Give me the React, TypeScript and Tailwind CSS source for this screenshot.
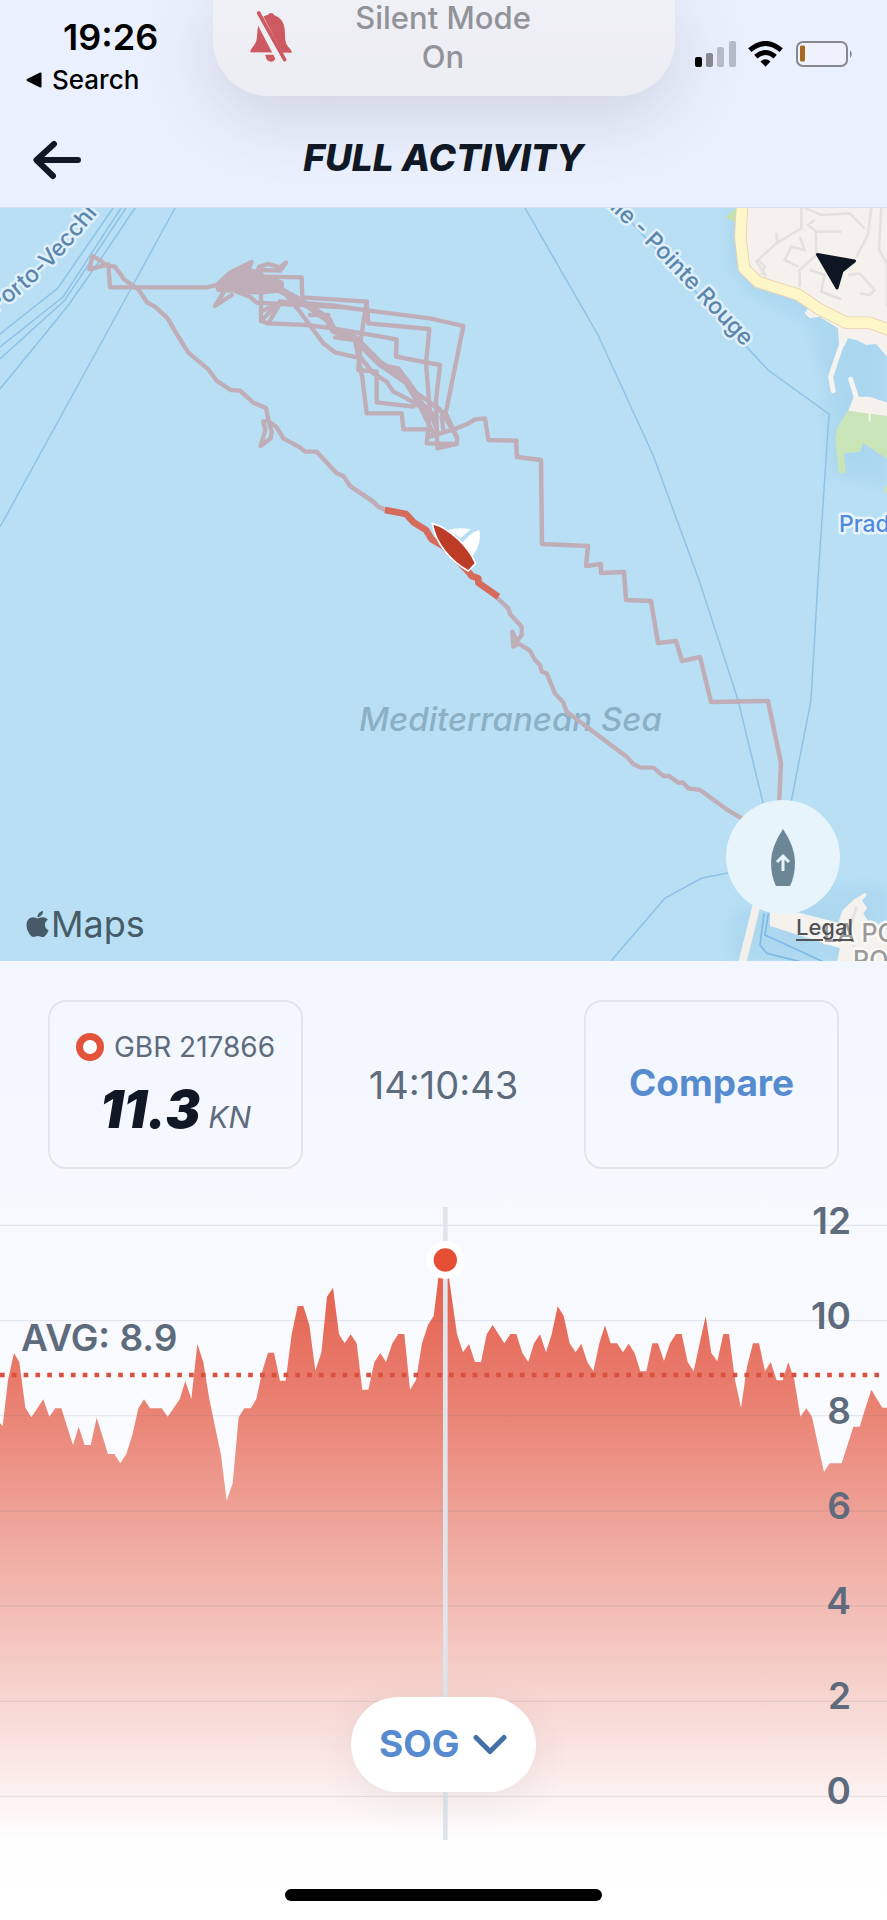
import React from "react";
import { FaApple } from "react-icons/fa";

const SPEED_AREA =
  "0,670 8,678 24,540 42,459 58,487 76,623 94,652 130,598 148,650 166,625 184,625 219,735 236,680 254,735 272,735 290,653 324,762 343,762 361,790 379,762 397,705 415,625 432,598 450,625 485,625 503,650 539,598 556,543 574,597 592,432 610,487 628,598 663,765 680,902 698,850 716,652 733,625 752,625 769,597 787,513 804,458 822,458 840,542 857,542 875,403 893,318 910,318 928,375 946,512 964,458 981,290 999,263 1017,403 1034,430 1052,403 1070,430 1087,569 1105,569 1123,487 1141,459 1158,486 1177,430 1195,402 1213,402 1230,569 1248,540 1266,430 1284,375 1301,348 1315,235 1336,180 1347,235 1371,403 1389,457 1407,432 1425,486 1443,486 1460,403 1478,375 1513,430 1531,402 1549,402 1567,459 1585,486 1602,430 1620,403 1638,457 1655,403 1673,319 1691,347 1709,430 1727,457 1744,431 1762,486 1780,514 1798,430 1815,376 1832,430 1851,430 1869,457 1886,431 1904,459 1921,514 1939,514 1957,430 1974,430 1992,483 2010,430 2028,402 2045,402 2063,486 2081,514 2099,430 2117,348 2134,459 2152,484 2170,402 2187,402 2205,540 2223,623 2241,500 2259,430 2277,430 2295,514 2312,486 2330,541 2348,541 2365,486 2383,540 2401,650 2419,625 2436,650 2454,735 2472,816 2489,790 2525,790 2560,680 2579,680 2596,625 2614,569 2647,623 2661,623 2661,1920 0,1920";

const AXIS = [12, 10, 8, 6, 4, 2, 0];
const GRID_LINES = [76, 362, 647, 933, 1218, 1504, 1789];

function StatusIcons() {
  return (
    <svg className="h-[26px] w-[158px]" viewBox="0 0 158 26" aria-label="Signal, wifi and battery">
      <rect x="0" y="16" width="7" height="10" rx="2" fill="#000" />
      <rect x="11" y="12" width="7" height="14" rx="2" fill="#85878f" />
      <rect x="22" y="6" width="7" height="20" rx="2" fill="#b7bac7" />
      <rect x="34" y="0" width="7" height="26" rx="2" fill="#b7bac7" />
      <g fill="none" stroke="#000" strokeWidth="5">
        <path d="M54.800 9.200 Q70.500 -4.200 86.200 9.200" />
        <path d="M60.800 15.600 Q70.500 7.400 80.200 15.600" />
      </g>
      <path d="M65.500 20.500 Q70.500 16 75.500 20.500 L70.500 25.800 Z" fill="#000" />
      <rect x="102" y="1" width="50" height="24" rx="6" fill="#eef2fe" stroke="#87888f" strokeWidth="2" />
      <rect x="105" y="4.500" width="5" height="16" rx="1.500" fill="#a9681f" />
      <path d="M155 9 Q158.500 13 155 17 Z" fill="#85868e" />
    </svg>
  );
}

function SilentBanner() {
  return (
    <div
      role="status"
      className="absolute top-0 left-1/2 flex h-24 w-[462px] -translate-x-1/2 items-start rounded-b-[56px] bg-linear-to-b from-[#f0f1f6] to-[#ececf3] shadow-[0_16px_72px_rgba(60,60,80,0.18)]"
    >
      <svg className="mt-[10px] ml-9 h-[53px] w-[44px] shrink-0" viewBox="0 0 132 159" aria-hidden="true">
        <path
          d="M4 127 C3 116 20 106 23 88 C27 66 22 36 45 19 Q53 15 56 15 Q60 9 66 9 Q73 9 76 16 C94 22 105 36 107 58 C109 83 107 99 118 111 Q129 122 128 128 Z"
          fill="#cd5961"
        />
        <path d="M49 134 H82 Q80 154 66 155 Q51 154 49 134Z" fill="#cd5961" />
        <path d="M20 4 L101 159" stroke="#eeeff4" strokeWidth="27" />
        <path d="M29 9 L107 149" stroke="#cd5961" strokeWidth="11" strokeLinecap="round" />
      </svg>
      <p className="-mt-[2px] grow pr-[81px] text-center text-[31px] leading-[39px] font-medium text-[#929399]">
        Silent Mode
        <br />
        On
      </p>
    </div>
  );
}

function Header() {
  return (
    <header className="relative overflow-hidden border-b border-[#d5dced] bg-[#ebf0fe]">
      <SilentBanner />
      <div className="relative flex h-24 items-start justify-between pr-[34px] pl-[26px] text-black">
        <div className="pt-4">
          <time className="block pl-[37px] text-[36px] leading-[42px] font-semibold">19:26</time>
          <button className="mt-1 flex items-center gap-[10px] text-[26px] leading-9 font-medium">
            <svg className="h-4 w-4" viewBox="0 0 16 16" aria-hidden="true">
              <path d="M1.500 8 L14.500 1.500 V14.500 Z" stroke="#000" strokeWidth="2" strokeLinejoin="round" />
            </svg>
            Search
          </button>
        </div>
        <div className="pt-[41px]">
          <StatusIcons />
        </div>
      </div>
      <div className="relative grid h-[111px] grid-cols-[1fr_auto_1fr] items-center px-8 pt-3">
        <button aria-label="Back" className="h-11 w-[50px] pt-1">
          <svg className="h-10 w-[50px]" viewBox="0 0 50 40" aria-hidden="true">
            <path
              d="M22 4 L4.500 20 L21 36 M5 20 H46"
              fill="none"
              stroke="#0f1824"
              strokeWidth="6"
              strokeLinecap="round"
              strokeLinejoin="round"
            />
          </svg>
        </button>
        <h1 className="text-[37px] leading-[44px] font-extrabold text-[#0f1824] italic">FULL ACTIVITY</h1>
      </div>
    </header>
  );
}

function ActivityMap() {
  return (
    <section aria-label="Map" className="grid overflow-hidden">
      <svg
        className="h-[753px] w-full [grid-area:1/1]"
        viewBox="0 208 887 753"
        preserveAspectRatio="xMidYMid slice"
        aria-hidden="true"
      >
        <defs>
          <path id="portoLine" d="M-5 313 Q32 288 65 252 L120 187" />
          <path id="rougeLine" d="M605 204 L655 253 L784 390" />
          <filter id="shoreGlow" x="-20%" y="-20%" width="140%" height="140%">
            <feGaussianBlur stdDeviation="22" />
          </filter>
        </defs>
        <rect y="208" width="887" height="753" fill="#b8dff4" />

        {/* northern coast */}
        <g transform="translate(443 200) scale(0.33333)">
          <path
            d="M860 24 H1340 V860 L1160 820 L1150 560 L1100 370 L920 280 L860 200Z"
            fill="#9dcde9"
            opacity="0.45"
            filter="url(#shoreGlow)"
          />
          <path d="M848 52 L872 30 L885 24 V72 Z" fill="#c3e0b1" />
          <path
            d="M885 24 H1340 V480 L1315 450 L1300 432 L1270 435 L1240 420 L1215 415 L1203 440 L1188 432 L1185 385 L1130 350 L1100 355 L1085 340 L1095 325 L1060 300 L935 262 L890 215 L878 120Z"
            fill="#f5f2ee"
          />
          <g fill="none" stroke="#e4e1de" strokeWidth="8">
            <path d="M1075 24 V85 L1000 130 L940 185 L970 230 M1085 24 L1135 45 L1220 40 L1265 85 M1285 24 L1275 105 L1240 170 M1315 24 L1308 150 L1332 190 V320" />
            <path d="M1115 60 L1095 75 L1120 95 H1195 M1118 95 L1120 165 L1070 210 V260 M1070 110 L1085 150 L1045 140 L1025 180 L1065 200 M1100 210 L1145 225 L1135 275 L1195 298 M1215 225 L1250 220 L1295 270 L1280 285 L1250 280 M1000 100 L1003 130 M945 180 L965 200 L955 225" />
          </g>
          <g fill="none" strokeLinejoin="round">
            <path d="M898 10 L892 110 L903 205 L945 246 L1065 284 L1130 328 L1210 368 L1280 368 L1345 392" stroke="#ecd0ad" strokeWidth="37" />
            <path d="M898 10 L892 110 L903 205 L945 246 L1065 284 L1130 328 L1210 368 L1280 368 L1345 392" stroke="#fcf6c9" strokeWidth="32" />
            <g stroke="#f5f4f1" strokeLinecap="round">
              <path d="M1200 420 L1163 530 L1170 572" strokeWidth="15" />
              <path d="M1223 538 L1240 592" strokeWidth="15" />
            </g>
          </g>
          <path d="M1232 590 L1280 590 L1345 612 V655 L1215 635Z" fill="#f5f2ee" />
          <path d="M1215 632 L1345 650 V785 L1300 755 L1262 730 L1250 755 L1203 760 L1208 818 L1188 820 L1177 720 L1182 685Z" fill="#c9e5b7" />
          <path d="M1280 635 V665" stroke="#f5f2ee" strokeWidth="6" />
          <path d="M1335 850 L1322 870 L1335 885Z" fill="#c9e5b7" />
        </g>

        {/* ferry routes */}
        <g fill="none" stroke="#8fc2e8" strokeWidth="1.5">
          <path d="M113 208 L58 288 L0 334 M121 208 L63 297 L0 347 M126 208 L65 300 L0 359 M135 208 L100 260 L67 307 L0 389 M175 208 L133 285 L0 527" />
          <path d="M525 208 L598 335 L653 455 L699 580 L738 700 L763 803" />
          <path d="M620 210 L768 370 L829 414 L818 580 L811 700 L791 803" />
          <path d="M728 873 L702 878 L665 898 L611 961" />
        </g>

        {/* southern harbour */}
        <g transform="translate(620 700) scale(0.33333)">
          <path d="M330 640 L650 560 H801 V785 H330Z" fill="#a2d0eb" opacity="0.5" filter="url(#shoreGlow)" />
          <path d="M410 615 L365 795" stroke="#f3f0eb" strokeWidth="24" fill="none" />
          <path
            d="M450 620 L525 635 L655 668 L668 630 L700 600 L735 578 L740 585 L726 602 L742 625 L730 640 L748 670 L810 690 V790 H650 L660 745 L450 678Z"
            fill="#f5f2ee"
          />
          <path d="M432 640 L420 735 L440 760 L540 785 M445 640 L435 705 L610 785" fill="none" stroke="#7db9e6" strokeWidth="5" />
          <path d="M710 620 L690 680 L700 740" stroke="#e4e1de" strokeWidth="8" fill="none" />
        </g>

        {/* map labels */}
        <g className="font-[Inter,sans-serif]" paintOrder="stroke" strokeLinejoin="round">
          <g fontSize="23" fontWeight="500" fill="#5c85ac" stroke="#dff0fa" strokeWidth="5">
            <text>
              <textPath href="#portoLine">Porto-Vecchi</textPath>
            </text>
            <text>
              <textPath href="#rougeLine">ille - Pointe Rouge</textPath>
            </text>
          </g>
          <text x="839" y="532" fontSize="23" fontWeight="500" fill="#4e8ae0" stroke="#e9f5fc" strokeWidth="5">
            Prado
          </text>
          <text x="359" y="731" fontSize="33" fontWeight="500" fontStyle="italic" fill="#8bb0c4">
            Mediterranean Sea
          </text>
          <g fontSize="25" fontWeight="500" fill="#9b9b9b" stroke="#fbf9f6" strokeWidth="5">
            <text x="823" y="942">LA POINTE</text>
            <text x="853" y="969">ROUGE</text>
          </g>
        </g>

        {/* recorded track */}
        <g fill="none" stroke="#bfaeb8" strokeWidth="13" strokeLinejoin="round" strokeLinecap="round">
          <g transform="translate(0 200) scale(0.33333)">
            <path d="M278 168 L302 182 L318 196 L345 200 L372 238 L400 258 L415 268 L442 308 L465 320 L503 355 L530 402 L565 458 L625 508 L650 542 L692 570 L720 572 L760 608 L798 624 L806 662 L790 664 L796 690 L782 738 L812 715 L815 695 L806 664 L830 682 L850 715 L900 742 L915 755 L950 755 L1010 820 L1030 828 L1050 858 L1120 905 L1135 920 L1158 930" />
            <path d="M278 168 L268 208 L325 193 L330 262 L620 262 L650 255" />
          </g>
          <g transform="translate(200 240) scale(0.33333)">
            <path d="M50 135 L90 98 L155 66 L145 90 L180 98 L190 110 L245 128 L245 150 L180 158 L110 152 L55 150Z" fill="#bfaeb8" />
            <path d="M172 95 L178 80 L205 72 L240 82 L258 68 L240 92 L185 90" />
            <path d="M45 198 L72 155 M45 198 L95 165" />
            <path d="M190 110 L305 112 L307 172 L500 185 L505 250 L688 267 L678 370 L690 520 L680 610 L770 612 L772 595 L740 525 L690 490" />
            <path d="M183 150 V243 L235 190 L183 215 M205 250 L238 195 M183 243 L205 250 L320 255 L400 265 L590 298 L588 350 L720 375 L708 480 L712 625 L770 612" />
            <path d="M235 190 L430 202 L690 235 L790 258 L735 530 M240 184 L400 196 L505 212" />
            <path d="M500 185 L482 300 L475 390 L530 395 L530 487 L640 500" />
            <path d="M465 300 L488 420 L500 520 L605 520 L610 568 L680 568" />
            <path d="M250 155 L300 215 L340 270 L370 310 L405 337 L475 353" />
            <path d="M200 130 L260 160 L330 200 L385 240 L400 270 L465 295 L540 370 L620 425 L660 490 L700 530" strokeWidth="22" />
            <path d="M405 292 L465 300 L480 350 L520 400 L560 425 L580 455 L620 475 L660 500 L700 580" />
            <path d="M490 325 L540 375 L595 385 L650 460 L720 508 L770 590" />
            <path d="M110 155 L150 170 L170 188 L300 195 M330 225 H385 V262 M725 530 L730 570 M700 540 L712 575 L690 590 L770 565 L800 553 L825 538 L855 535 L865 600 L950 602" />
          </g>
          <path
            d="M516 441 L517 457 L541 460 L542 544 L588 546 L586 566 L601 564 L601 573 L624 572 L626 600 L651 601 L658 643 L676 641 L682 661 L700 657 L711 702 L768 701 L781 763 L779 805"
            strokeWidth="4.500"
          />
          <g transform="translate(340 480) scale(0.33333)">
            <path d="M470 352 L505 385 L510 402 L545 440 L545 465 L530 485 L517 455 L520 500 L535 490 L570 512 L585 540 L600 555 L605 575 L620 580 L645 640 L670 668 L680 695 L740 740 L860 830 L880 852 L900 862 L940 863 L970 888 L988 888 L1015 908 L1028 907 L1045 925 L1080 930 L1160 988 L1205 1015" />
            <path d="M30 18 L100 65 L115 80 L138 90" />
            <path d="M135 90 L198 102 L222 128 L258 150 L275 178 L310 198 L385 275 L395 288 L415 295 L415 308 L475 350" stroke="#d66a5b" strokeWidth="20" strokeLinecap="butt" />
          </g>
        </g>

        {/* live boat */}
        <g transform="translate(340 480) scale(0.33333)">
          <path d="M325 150 Q355 140 392 148 L362 174 Z" fill="#fff" />
          <path d="M366 188 Q400 152 418 150 Q428 185 398 228 Z" fill="#fff" />
          <path d="M277 130 C330 145 385 200 407 250 L385 273 C335 245 285 190 277 130Z" fill="#bd3c27" stroke="#fff" strokeWidth="5" strokeLinejoin="round" />
        </g>

        <circle cx="783" cy="857" r="57" fill="#e8f4fc" />
        <path d="M783 829 Q795 847 795 862 Q795 876 790 886 H776 Q771 876 771 862 Q771 847 783 829Z" fill="#6b8795" />
        <path d="M783 871 V857 M777 862 L783 856 L789 862" fill="none" stroke="#e8f4fc" strokeWidth="3" />

        <path
          d="M817.500 254.500 L854.500 261 L842 271 L837 288 Z"
          fill="#0d1622"
          stroke="#0d1622"
          strokeWidth="3"
          strokeLinejoin="round"
        />
      </svg>
      <div className="z-10 flex items-end justify-between self-end pr-[34px] pb-4 pl-6 [grid-area:1/1]">
        <p className="flex items-center text-[36px] leading-[42px] text-[#465b67]">
          <FaApple className="h-[30px] w-[27px]" aria-hidden="true" />
          Maps
        </p>
        <a href="#legal" className="pb-1 text-[22px] leading-7 font-medium text-[#505356] underline underline-offset-4">
          Legal
        </a>
      </div>
    </section>
  );
}

function Stats() {
  return (
    <section className="flex items-center justify-between px-12 pt-[39px] pb-[38px] text-[#5d6b7c]">
      <div className="flex h-[169px] w-[255px] flex-col items-center rounded-[18px] border-2 border-[#e2e5ec] pt-6">
        <div className="flex items-center gap-[10px]">
          <span className="h-7 w-7 rounded-full border-[7px] border-[#e3523b] bg-white" />
          <span className="text-[28px] leading-[42px]">GBR 217866</span>
        </div>
        <p className="flex items-baseline gap-2 italic">
          <span className="text-[52px] leading-[84px] font-black text-[#0f1824]">11.3</span>
          <span className="text-[30px]">KN</span>
        </p>
      </div>
      <time className="text-[38px] leading-[46px]">14:10:43</time>
      <button className="h-[169px] w-[255px] rounded-[18px] border-2 border-[#e2e5ec] pb-1 text-[37px] leading-[44px] font-bold text-[#568bd0]">
        Compare
      </button>
    </section>
  );
}

function SpeedChart() {
  return (
    <section aria-label="Speed over ground" className="grid text-[#5d6b7c]">
      <svg
        className="h-[633px] w-full [grid-area:1/1]"
        viewBox="0 21 2661 1899"
        preserveAspectRatio="none"
        aria-hidden="true"
      >
        <defs>
          <linearGradient id="speedFill" gradientUnits="userSpaceOnUse" x1="0" y1="21" x2="0" y2="1920">
            <stop offset="0" stopColor="#e0432c" stopOpacity="0.950" />
            <stop offset="0.300" stopColor="#e34f39" stopOpacity="0.720" />
            <stop offset="0.700" stopColor="#e4583f" stopOpacity="0.320" />
            <stop offset="1" stopColor="#e4583f" stopOpacity="0" />
          </linearGradient>
        </defs>
        <polygon points={SPEED_AREA} fill="url(#speedFill)" />
        {GRID_LINES.map((y) => (
          <path key={y} d={`M0 ${y} H2661`} stroke="#5d6b7c" strokeOpacity="0.160" strokeWidth="3" />
        ))}
        <path d="M0 525 H2642" stroke="#d9503e" strokeWidth="13" strokeDasharray="14 21.450" />
        <path d="M1336 21 V1920" stroke="#e0e4eb" strokeWidth="14" />
        <circle cx="1336" cy="180" r="57" fill="#fff" />
        <circle cx="1336" cy="180" r="35" fill="#e64f35" />
      </svg>
      <p className="self-start pt-[109px] pl-[21px] text-[37px] leading-[44px] font-semibold [grid-area:1/1]">
        AVG: 8.9
      </p>
      <ul className="-mt-[34px] flex flex-col self-start justify-self-end pr-9 text-right text-[37px] leading-[95px] font-semibold [grid-area:1/1]">
        {AXIS.map((value) => (
          <li key={value}>{value}</li>
        ))}
      </ul>
      <div className="z-10 mb-12 grid items-center self-end justify-self-center rounded-[48px] bg-white shadow-[0_8px_40px_rgba(60,60,90,0.08)] [grid-area:1/1]">
        <select
          aria-label="SOG"
          className="h-[95px] w-[185px] appearance-none rounded-[48px] bg-transparent pb-[2px] pl-[28px] text-[37px] font-bold text-[#568bd0] [grid-area:1/1]"
        >
          <option>SOG</option>
        </select>
        <svg
          className="pointer-events-none mr-7 h-[22px] w-9 justify-self-end [grid-area:1/1]"
          viewBox="0 0 36 22"
          aria-hidden="true"
        >
          <path d="M4 3.500 L18 17.500 L32 3.500" fill="none" stroke="#4270a6" strokeWidth="5" strokeLinecap="round" strokeLinejoin="round" />
        </svg>
      </div>
    </section>
  );
}

export default function App() {
  return (
    <main className="flex min-h-screen flex-col bg-white font-[Inter,sans-serif]">
      <Header />
      <ActivityMap />
      <div className="grow bg-linear-to-b from-[#f2f6fe] via-[#fafbfe] to-white">
        <Stats />
        <SpeedChart />
        <div className="flex justify-center pt-[49px] pb-[19px]">
          <div className="h-3 w-[317px] rounded-full bg-black" />
        </div>
      </div>
    </main>
  );
}
